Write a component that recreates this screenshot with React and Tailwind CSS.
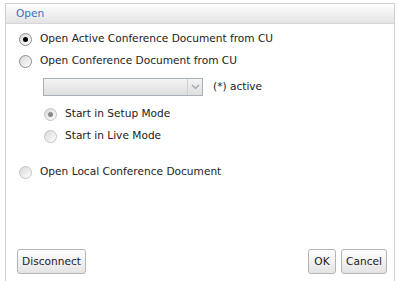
import React from 'react';

function Radio({ checked, disabled }) {
    return (
        <span
            className={`relative flex h-[13px] w-[13px] shrink-0 items-center justify-center rounded-full border bg-gradient-to-br from-[#d8d8d8] to-white ${
                disabled ? 'border-[#c4c4c4]' : 'border-[#8c8c8c]'
            }`}
        >
            {checked && (
                <span className={`h-[5px] w-[5px] rounded-full ${disabled ? 'bg-[#8a8a8a]' : 'bg-black'}`} />
            )}
        </span>
    );
}

function Option({ label, checked, disabled, indent }) {
    return (
        <div className={`flex h-[22px] items-center ${indent ? 'pl-[38px]' : 'pl-[13px]'}`}>
            <Radio checked={checked} disabled={disabled} />
            <span className="ml-[8px] text-[#222]">{label}</span>
        </div>
    );
}

function Button({ children, className }) {
    return (
        <button
            className={`h-[25px] rounded-[3px] border border-[#b5b5b5] bg-gradient-to-b from-white to-[#e4e4e4] px-[3px] text-[#222] ${className}`}
        >
            {children}
        </button>
    );
}

export default function App() {
    return (
        <div className="h-[281px] w-[398px] overflow-hidden bg-white font-['DejaVu_Sans',sans-serif] text-[10.6px]">
            <div className="ml-[5px] mr-[3px] mt-[3px] flex h-[300px] flex-col border border-[#cfcfcf]">
                <div className="flex h-[20px] items-center border-b border-[#d6d6d6] bg-gradient-to-b from-white to-[#e3e3e3] pl-[10px] text-[#3a6fc0]">
                    Open
                </div>

                <div className="pt-[4px]">
                    <Option label="Open Active Conference Document from CU" checked />
                    <Option label="Open Conference Document from CU" />

                    <div className="mt-[6px] flex items-center pl-[37px]">
                        <div className="flex h-[18px] w-[160px] items-stretch border border-[#a9b0b8] bg-gradient-to-b from-[#f4f4f4] to-[#dedede]">
                            <div className="flex-1" />
                            <div className="flex w-[15px] items-center justify-center border-l border-[#d0d0d0]">
                                <svg width="9" height="6" viewBox="0 0 9 6">
                                    <path d="M1 1 L4.5 4.5 L8 1" fill="none" stroke="#9aa3ad" strokeWidth="1.2" />
                                </svg>
                            </div>
                        </div>
                        <span className="ml-[10px] text-[#222]">(*) active</span>
                    </div>

                    <div className="mt-[7px]">
                        <Option label="Start in Setup Mode" checked disabled indent />
                        <Option label="Start in Live Mode" disabled indent />
                    </div>

                    <div className="mt-[14px]">
                        <Option label="Open Local Conference Document" disabled />
                    </div>
                </div>

                <div className="mt-[66px] flex items-center pl-[11px] pr-[7px]">
                    <Button className="w-[69px]">Disconnect</Button>
                    <div className="flex-1" />
                    <Button className="w-[28px]">OK</Button>
                    <Button className="ml-[5px] w-[46px]">Cancel</Button>
                </div>
            </div>
        </div>
    );
}
